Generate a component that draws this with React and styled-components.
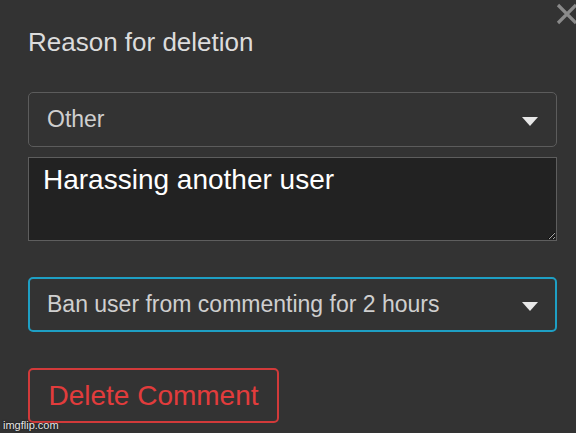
import React from 'react';
import styled, { createGlobalStyle } from 'styled-components';

const GlobalStyle = createGlobalStyle`
  html, body {
    margin: 0;
    padding: 0;
    background: #333333;
    overflow: hidden;
  }
  body {
    font-family: "Liberation Sans", Arial, sans-serif;
  }
`;

const Panel = styled.div`
  position: relative;
  width: 576px;
  height: 433px;
  box-sizing: border-box;
  padding: 27px 19px 0 28px;
  display: flex;
  flex-direction: column;
`;

const Title = styled.h2`
  margin: 0 0 35px;
  font-size: 26px;
  line-height: 30px;
  font-weight: 400;
  color: #dcdcdc;
`;

const CloseButton = styled.button`
  position: absolute;
  top: 3px;
  left: 556px;
  width: 24px;
  height: 24px;
  padding: 0;
  border: none;
  background: none;
  color: #8a8a8a;
  cursor: pointer;
`;

const SelectBox = styled.div`
  position: relative;
  height: 55px;
  box-sizing: border-box;
  border: ${p => (p.$focused ? '2px solid #1e9fc4' : '1px solid #5c5c5c')};
  border-radius: 5px;
  display: flex;
  align-items: center;
  padding: 0 ${p => (p.$focused ? 17 : 18)}px 0 ${p => (p.$focused ? 17 : 18)}px;
  margin-top: ${p => p.$gap || 0}px;
  color: #cfcfcf;
  font-size: 23px;
`;

const SelectLabel = styled.span`
  flex: 1;
`;

const Caret = styled.span`
  width: 0;
  height: 0;
  border-left: 8px solid transparent;
  border-right: 8px solid transparent;
  border-top: 9px solid #e8e8e8;
  margin-top: 3px;
`;

const Reason = styled.textarea`
  display: block;
  margin-top: 10px;
  height: 84px;
  box-sizing: border-box;
  border: 1px solid #5e5e5e;
  background: #222222;
  color: #ffffff;
  font-family: "Liberation Sans", Arial, sans-serif;
  font-size: 28px;
  line-height: 32px;
  padding: 6px 14px;
  resize: vertical;
  outline: none;
`;

const DeleteButton = styled.button`
  align-self: flex-start;
  margin-top: 36px;
  width: 251px;
  height: 55px;
  box-sizing: border-box;
  border: 2px solid #d23a3a;
  border-radius: 5px;
  background: transparent;
  color: #e23c3c;
  font-family: "Liberation Sans", Arial, sans-serif;
  font-size: 28px;
  padding: 0 0 0 0;
  text-align: center;
  cursor: pointer;
`;

const Watermark = styled.span`
  position: absolute;
  left: 3px;
  bottom: 2px;
  font-size: 11px;
  color: #e6e6e6;
  text-shadow: 0 0 2px #000;
`;

const Select = ({ value, focused, gap }) => (
  <SelectBox $focused={focused} $gap={gap}>
    <SelectLabel>{value}</SelectLabel>
    <Caret />
  </SelectBox>
);

export default function App() {
  return (
    <>
      <GlobalStyle />
      <Panel>
        <CloseButton aria-label="Close">
          <svg width="24" height="24" viewBox="0 0 24 24">
            <path d="M2 2 L20 20 M20 2 L2 20" stroke="currentColor" strokeWidth="3.2" fill="none" />
          </svg>
        </CloseButton>
        <Title>Reason for deletion</Title>
        <Select value="Other" />
        <Reason defaultValue="Harassing another user" />
        <Select value="Ban user from commenting for 2 hours" focused gap={36} />
        <DeleteButton>Delete Comment</DeleteButton>
        <Watermark>imgflip.com</Watermark>
      </Panel>
    </>
  );
}
